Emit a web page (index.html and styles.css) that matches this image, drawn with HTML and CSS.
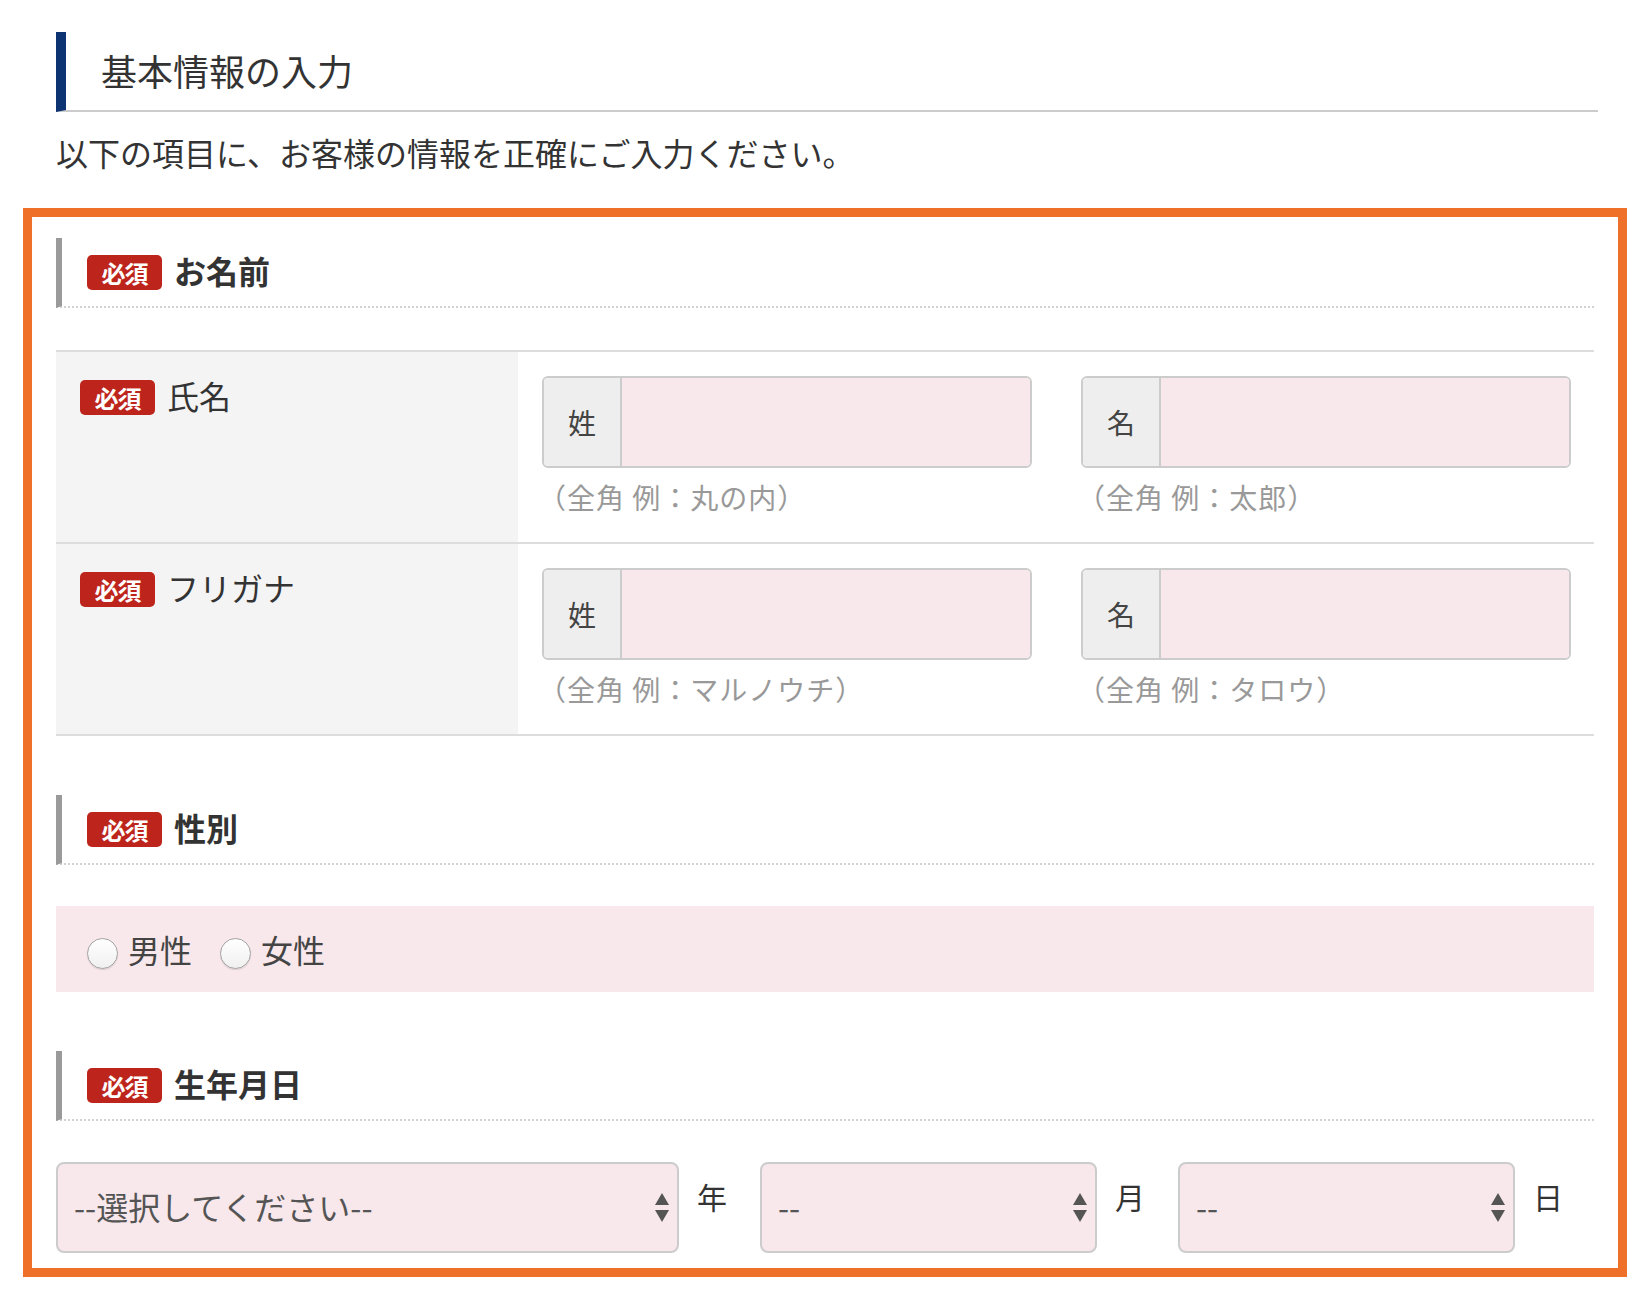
FILE: index.html
```html
<!DOCTYPE html>
<html lang="ja">
<head>
<meta charset="utf-8">
<title>基本情報の入力</title>
<link rel="stylesheet" href="styles.css">
</head>
<body>
<div class="page">
  <h2 class="heading">基本情報の入力</h2>
  <p class="lead">以下の項目に、お客様の情報を正確にご入力ください。</p>

  <div class="box">
    <div class="sec-head"><span class="badge">必須</span><span class="sec-title">お名前</span></div>

    <div class="table">
      <div class="row">
        <div class="row-label"><span class="badge badge-sm">必須</span><span class="label-text">氏名</span></div>
        <div class="row-body">
          <div class="field">
            <div class="igroup"><span class="prefix">姓</span><input class="ifield" type="text"></div>
            <div class="hint">（全角 例：丸の内）</div>
          </div>
          <div class="field">
            <div class="igroup"><span class="prefix">名</span><input class="ifield" type="text"></div>
            <div class="hint">（全角 例：太郎）</div>
          </div>
        </div>
      </div>
      <div class="row">
        <div class="row-label"><span class="badge badge-sm">必須</span><span class="label-text">フリガナ</span></div>
        <div class="row-body">
          <div class="field">
            <div class="igroup"><span class="prefix">姓</span><input class="ifield" type="text"></div>
            <div class="hint">（全角 例：マルノウチ）</div>
          </div>
          <div class="field">
            <div class="igroup"><span class="prefix">名</span><input class="ifield" type="text"></div>
            <div class="hint">（全角 例：タロウ）</div>
          </div>
        </div>
      </div>
    </div>

    <div class="sec-head sec-gap"><span class="badge">必須</span><span class="sec-title">性別</span></div>
    <div class="gender">
      <label class="opt"><span class="radio"></span><span class="opt-text">男性</span></label>
      <label class="opt"><span class="radio"></span><span class="opt-text">女性</span></label>
    </div>

    <div class="sec-head sec-gap"><span class="badge">必須</span><span class="sec-title">生年月日</span></div>
    <div class="birth">
      <div class="sel sel-year"><span class="sel-text">--選択してください--</span>
        <svg class="arrows" width="16" height="32" viewBox="0 0 16 32"><path d="M8 1 L15 13 L1 13 Z" fill="#555"/><path d="M1 18 L15 18 L8 30 Z" fill="#555"/></svg>
      </div>
      <span class="unit">年</span>
      <div class="sel sel-small"><span class="sel-text">--</span>
        <svg class="arrows" width="16" height="32" viewBox="0 0 16 32"><path d="M8 1 L15 13 L1 13 Z" fill="#555"/><path d="M1 18 L15 18 L8 30 Z" fill="#555"/></svg>
      </div>
      <span class="unit">月</span>
      <div class="sel sel-small"><span class="sel-text">--</span>
        <svg class="arrows" width="16" height="32" viewBox="0 0 16 32"><path d="M8 1 L15 13 L1 13 Z" fill="#555"/><path d="M1 18 L15 18 L8 30 Z" fill="#555"/></svg>
      </div>
      <span class="unit unit-last">日</span>
    </div>
  </div>
</div>
</body>
</html>
```

FILE: styles.css
```css
* { box-sizing: border-box; }
html, body { margin: 0; padding: 0; background: #fff; }
body {
  font-family: "Noto Sans CJK JP", "Noto Sans", sans-serif;
  color: #333;
  width: 1650px;
}
.page { padding-top: 32px; padding-bottom: 10px; }

.heading {
  margin: 0 52px 0 56px;
  height: 80px;
  border-left: 10px solid #0d3372;
  border-bottom: 2px solid #cccccc;
  padding-left: 35px;
  font-size: 36px;
  font-weight: 400;
  line-height: 76px;
  color: #333;
}

.lead {
  margin: 20px 0 0 56px;
  font-size: 32px;
  line-height: 40px;
  color: #333;
}

.box {
  margin: 36px 23px 0 23px;
  border: 9px solid #ef7029;
  padding: 21px 24px 15px 24px;
}

.sec-head {
  display: flex;
  align-items: center;
  height: 70px;
  border-left: 6px solid #9a9a9a;
  border-bottom: 2px dotted #d2d2d2;
  padding-left: 25px;
}
.sec-gap { margin-top: 59px; }

.badge {
  display: inline-flex;
  align-items: center;
  justify-content: center;
  width: 75px;
  height: 35px;
  border-radius: 5px;
  background: #bd251c;
  color: #fff;
  font-size: 24px;
  font-weight: 700;
  letter-spacing: -1px;
  flex: none;
}
.sec-title {
  margin-left: 12px;
  padding-bottom: 5px;
  font-size: 32px;
  font-weight: 700;
  color: #333;
  line-height: 40px;
}

.table {
  margin-top: 42px;
  border-bottom: 2px solid #dddddd;
}
.row {
  display: grid;
  grid-template-columns: 462px 1fr;
  border-top: 2px solid #dddddd;
}
.row-label {
  background: #f4f4f4;
  padding: 28px 0 0 24px;
  display: flex;
  align-items: flex-start;
}
.label-text {
  margin-left: 12px;
  margin-top: -3px;
  font-size: 32px;
  line-height: 36px;
  color: #333;
}
.row-body {
  display: flex;
  gap: 49px;
  padding: 24px 23px 27px 24px;
}
.field { flex: 1; }
.igroup {
  display: flex;
  height: 92px;
  border: 2px solid #cccccc;
  border-radius: 6px;
  overflow: hidden;
}
.prefix {
  width: 78px;
  flex: none;
  display: flex;
  align-items: center;
  justify-content: center;
  background: #eeeeee;
  border-right: 2px solid #cccccc;
  font-size: 28px;
  color: #444;
}
.ifield {
  flex: 1;
  min-width: 0;
  border: 0;
  margin: 0;
  background: #f8e8eb;
  outline: none;
}
.hint {
  margin-top: 12px;
  height: 35px;
  font-size: 28px;
  letter-spacing: 1px;
  line-height: 35px;
  color: #999;
  margin-left: -4px;
}

.gender {
  margin-top: 41px;
  height: 86px;
  background: #f8e8eb;
  display: flex;
  align-items: center;
  padding-left: 31px;
  gap: 28px;
}
.opt { display: flex; align-items: center; }
.radio {
  width: 31px;
  height: 31px;
  border-radius: 50%;
  border: 1.5px solid #a3a3a3;
  background: linear-gradient(#ffffff, #f0f0f0);
  box-shadow: 0 1px 1px rgba(0,0,0,0.12);
  margin-top: 8px;
}
.opt-text {
  margin-left: 10px;
  font-size: 32px;
  line-height: 40px;
  color: #444;
}

.birth {
  margin-top: 41px;
  display: flex;
  align-items: flex-start;
}
.sel {
  position: relative;
  height: 91px;
  border: 2px solid #cccccc;
  border-radius: 8px;
  background: #f8e8eb;
  display: flex;
  align-items: center;
  padding-left: 16px;
}
.sel-year { width: 623px; }
.sel-small { width: 337px; }
.sel-text {
  font-size: 32px;
  color: #555;
  margin-top: -3px;
}
.arrows {
  position: absolute;
  right: 7px;
  top: 28px;
}
.unit {
  margin: 14px 33px 0 18px;
  font-size: 30px;
  line-height: 40px;
  color: #333;
}
.unit-last { margin-right: 0; }
```
